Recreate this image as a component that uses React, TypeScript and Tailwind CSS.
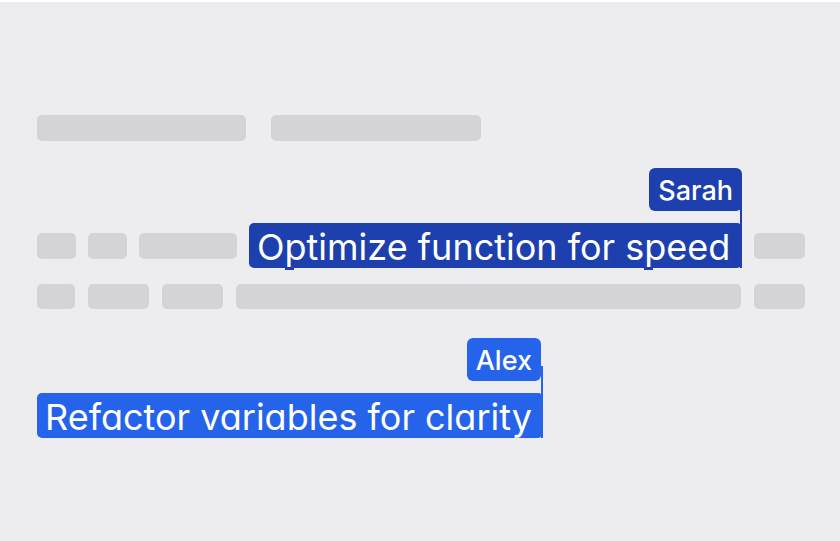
import type { ReactNode } from "react";

function Bar({ className }: { className: string }) {
  return <div className={`rounded-[5px] bg-[#d4d4d8] ${className}`} />;
}

/* A letter whose descender carries a short mark below the selection's lower edge. */
function Descender({ children }: { children: ReactNode }) {
  return (
    <span className="relative after:absolute after:-bottom-px after:left-0 after:h-[2px] after:w-[9px] after:bg-[#1e40af]">
      {children}
    </span>
  );
}

type SelectionProps = {
  name: string;
  color: string;
  tag: string;
  width: string;
  children: ReactNode;
};

function Selection({ name, color, tag, width, children }: SelectionProps) {
  return (
    <div className={`relative ${width}`}>
      <p
        className={`h-[45px] rounded-[5px] pl-2 text-[36px] leading-[48px] whitespace-nowrap text-white ${color}`}
      >
        {children}
      </p>
      <span
        className={`absolute bottom-[57px] h-[43px] rounded-md px-[9px] text-[27px] leading-[45px] font-medium text-white ${color} ${tag}`}
      >
        {name}
      </span>
      <span className={`absolute right-0 bottom-0 h-[72px] w-[2px] ${color}`} />
    </div>
  );
}

export default function App() {
  return (
    <main className="min-h-screen border-t-2 border-white bg-[#ededef] pt-[113px] pr-[35px] pb-12 pl-[37px] font-['Inter',sans-serif]">
      <div className="flex gap-[25px]">
        <Bar className="h-[26px] w-[209px]" />
        <Bar className="h-[26px] w-[210px]" />
      </div>

      <div className="mt-[82px] flex items-center gap-3">
        <Bar className="h-[26px] w-[39px]" />
        <Bar className="h-[26px] w-[39px]" />
        <Bar className="h-[26px] w-[98px]" />
        <Selection
          name="Sarah"
          color="bg-[#1e40af]"
          tag="right-0"
          width="min-w-0 flex-1"
        >
          O<Descender>p</Descender>timize function for s<Descender>p</Descender>eed
        </Selection>
        <Bar className="h-[26px] w-[51px]" />
      </div>

      <div className="mt-4 flex gap-[13px]">
        <Bar className="h-[25px] w-[38px]" />
        <Bar className="h-[25px] w-[61px]" />
        <Bar className="h-[25px] w-[61px]" />
        <Bar className="h-[25px] min-w-0 flex-1" />
        <Bar className="h-[25px] w-[51px]" />
      </div>

      <div className="mt-[84px] flex [font-feature-settings:'cv11']">
        <Selection
          name="Alex"
          color="bg-[#2563eb]"
          tag="right-[2px]"
          width="w-[506px]"
        >
          Refactor variables for clarity
        </Selection>
      </div>
    </main>
  );
}
